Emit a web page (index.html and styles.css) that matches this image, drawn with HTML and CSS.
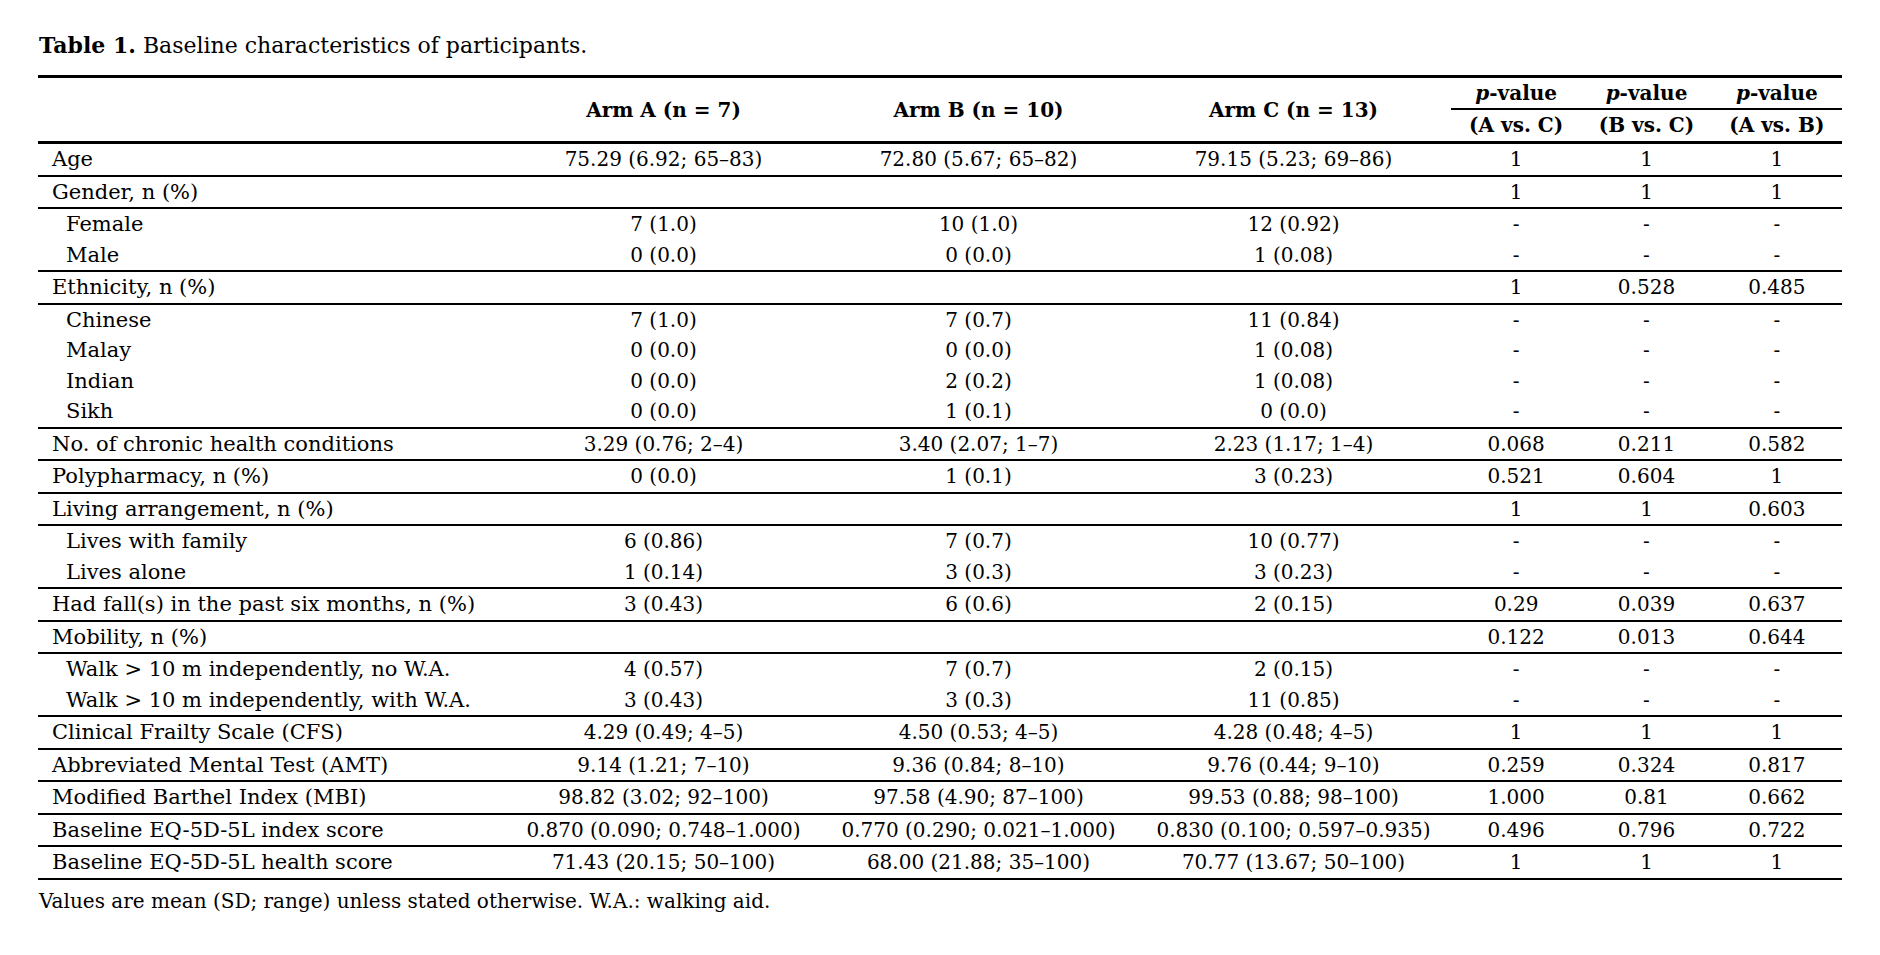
FILE: index.html
```html
<!DOCTYPE html>
<html lang="en">
<head>
<meta charset="utf-8">
<title>Table 1</title>
<link rel="stylesheet" href="styles.css">
</head>
<body>
<div class="page">
  <div class="caption"><b>Table 1.</b> Baseline characteristics of participants.</div>
  <table class="tbl">
    <colgroup>
      <col class="c-label">
      <col class="c-arm">
      <col class="c-arm">
      <col class="c-arm">
      <col class="c-p">
      <col class="c-p">
      <col class="c-p">
    </colgroup>
    <thead>
      <tr class="h1">
        <th rowspan="2"></th>
        <th rowspan="2">Arm A (n = 7)</th>
        <th rowspan="2">Arm B (n = 10)</th>
        <th rowspan="2">Arm C (n = 13)</th>
        <th class="pv"><i>p</i>-value</th>
        <th class="pv"><i>p</i>-value</th>
        <th class="pv"><i>p</i>-value</th>
      </tr>
      <tr class="h2">
        <th>(A vs. C)</th>
        <th>(B vs. C)</th>
        <th>(A vs. B)</th>
      </tr>
    </thead>
    <tbody>
      <tr class="sep"><td>Age</td><td>75.29 (6.92; 65–83)</td><td>72.80 (5.67; 65–82)</td><td>79.15 (5.23; 69–86)</td><td>1</td><td>1</td><td>1</td></tr>
      <tr class="sep"><td>Gender, n (%)</td><td></td><td></td><td></td><td>1</td><td>1</td><td>1</td></tr>
      <tr><td class="sub">Female</td><td>7 (1.0)</td><td>10 (1.0)</td><td>12 (0.92)</td><td>-</td><td>-</td><td>-</td></tr>
      <tr class="sep"><td class="sub">Male</td><td>0 (0.0)</td><td>0 (0.0)</td><td>1 (0.08)</td><td>-</td><td>-</td><td>-</td></tr>
      <tr class="sep"><td>Ethnicity, n (%)</td><td></td><td></td><td></td><td>1</td><td>0.528</td><td>0.485</td></tr>
      <tr><td class="sub">Chinese</td><td>7 (1.0)</td><td>7 (0.7)</td><td>11 (0.84)</td><td>-</td><td>-</td><td>-</td></tr>
      <tr><td class="sub">Malay</td><td>0 (0.0)</td><td>0 (0.0)</td><td>1 (0.08)</td><td>-</td><td>-</td><td>-</td></tr>
      <tr><td class="sub">Indian</td><td>0 (0.0)</td><td>2 (0.2)</td><td>1 (0.08)</td><td>-</td><td>-</td><td>-</td></tr>
      <tr class="sep"><td class="sub">Sikh</td><td>0 (0.0)</td><td>1 (0.1)</td><td>0 (0.0)</td><td>-</td><td>-</td><td>-</td></tr>
      <tr class="sep"><td>No. of chronic health conditions</td><td>3.29 (0.76; 2–4)</td><td>3.40 (2.07; 1–7)</td><td>2.23 (1.17; 1–4)</td><td>0.068</td><td>0.211</td><td>0.582</td></tr>
      <tr class="sep"><td>Polypharmacy, n (%)</td><td>0 (0.0)</td><td>1 (0.1)</td><td>3 (0.23)</td><td>0.521</td><td>0.604</td><td>1</td></tr>
      <tr class="sep"><td>Living arrangement, n (%)</td><td></td><td></td><td></td><td>1</td><td>1</td><td>0.603</td></tr>
      <tr><td class="sub">Lives with family</td><td>6 (0.86)</td><td>7 (0.7)</td><td>10 (0.77)</td><td>-</td><td>-</td><td>-</td></tr>
      <tr class="sep"><td class="sub">Lives alone</td><td>1 (0.14)</td><td>3 (0.3)</td><td>3 (0.23)</td><td>-</td><td>-</td><td>-</td></tr>
      <tr class="sep"><td>Had fall(s) in the past six months, n (%)</td><td>3 (0.43)</td><td>6 (0.6)</td><td>2 (0.15)</td><td>0.29</td><td>0.039</td><td>0.637</td></tr>
      <tr class="sep"><td>Mobility, n (%)</td><td></td><td></td><td></td><td>0.122</td><td>0.013</td><td>0.644</td></tr>
      <tr><td class="sub">Walk &gt; 10 m independently, no W.A.</td><td>4 (0.57)</td><td>7 (0.7)</td><td>2 (0.15)</td><td>-</td><td>-</td><td>-</td></tr>
      <tr class="sep"><td class="sub">Walk &gt; 10 m independently, with W.A.</td><td>3 (0.43)</td><td>3 (0.3)</td><td>11 (0.85)</td><td>-</td><td>-</td><td>-</td></tr>
      <tr class="sep"><td>Clinical Frailty Scale (CFS)</td><td>4.29 (0.49; 4–5)</td><td>4.50 (0.53; 4–5)</td><td>4.28 (0.48; 4–5)</td><td>1</td><td>1</td><td>1</td></tr>
      <tr class="sep"><td>Abbreviated Mental Test (AMT)</td><td>9.14 (1.21; 7–10)</td><td>9.36 (0.84; 8–10)</td><td>9.76 (0.44; 9–10)</td><td>0.259</td><td>0.324</td><td>0.817</td></tr>
      <tr class="sep"><td>Modified Barthel Index (MBI)</td><td>98.82 (3.02; 92–100)</td><td>97.58 (4.90; 87–100)</td><td>99.53 (0.88; 98–100)</td><td>1.000</td><td>0.81</td><td>0.662</td></tr>
      <tr class="sep"><td>Baseline EQ-5D-5L index score</td><td>0.870 (0.090; 0.748–1.000)</td><td>0.770 (0.290; 0.021–1.000)</td><td>0.830 (0.100; 0.597–0.935)</td><td>0.496</td><td>0.796</td><td>0.722</td></tr>
      <tr class="last"><td>Baseline EQ-5D-5L health score</td><td>71.43 (20.15; 50–100)</td><td>68.00 (21.88; 35–100)</td><td>70.77 (13.67; 50–100)</td><td>1</td><td>1</td><td>1</td></tr>
    </tbody>
  </table>
  <div class="note">Values are mean (SD; range) unless stated otherwise. W.A.: walking aid.</div>
</div>
</body>
</html>
```
FILE: styles.css
```css
html, body {
  margin: 0;
  padding: 0;
  background: #ffffff;
}

body {
  font-family: "DejaVu Serif", "Liberation Serif", serif;
  color: #000;
}

.page {
  padding: 29px 0 0 38px;
}

.caption {
  font-size: 22px;
  line-height: 32px;
  padding-left: 1px;
  margin-bottom: 13px;
}

.caption b {
  font-weight: bold;
}

.tbl {
  border-collapse: collapse;
  table-layout: fixed;
  width: 1804px;
  font-size: 20px;
  border-top: 3px solid #000;
  border-bottom: 2.5px solid #000;
}

.c-label { width: 468px; }
.c-arm { width: 315px; }
.c-p { width: 130.33px; }

.tbl th {
  font-weight: bold;
  text-align: center;
  padding: 0;
  vertical-align: middle;
  white-space: nowrap;
}

.tbl thead .h1 th {
  height: 30px;
  line-height: 30px;
}

.tbl thead .h1 th.pv {
  border-bottom: 2px solid #000;
}

.tbl thead .h2 th {
  height: 31px;
  line-height: 31px;
}

.tbl thead {
  border-bottom: 3px solid #000;
}

.tbl td {
  padding: 0;
  height: 30.5px;
  line-height: 30.5px;
  text-align: center;
  white-space: nowrap;
}

.tbl td:first-child {
  text-align: left;
  padding-left: 14px;
  font-size: 21px;
}

.tbl td.sub {
  padding-left: 28px;
}

.tbl tr.sep {
  border-bottom: 2px solid #000;
}

.note {
  font-size: 20px;
  line-height: 30px;
  padding-left: 1px;
  margin-top: 6px;
}
```
